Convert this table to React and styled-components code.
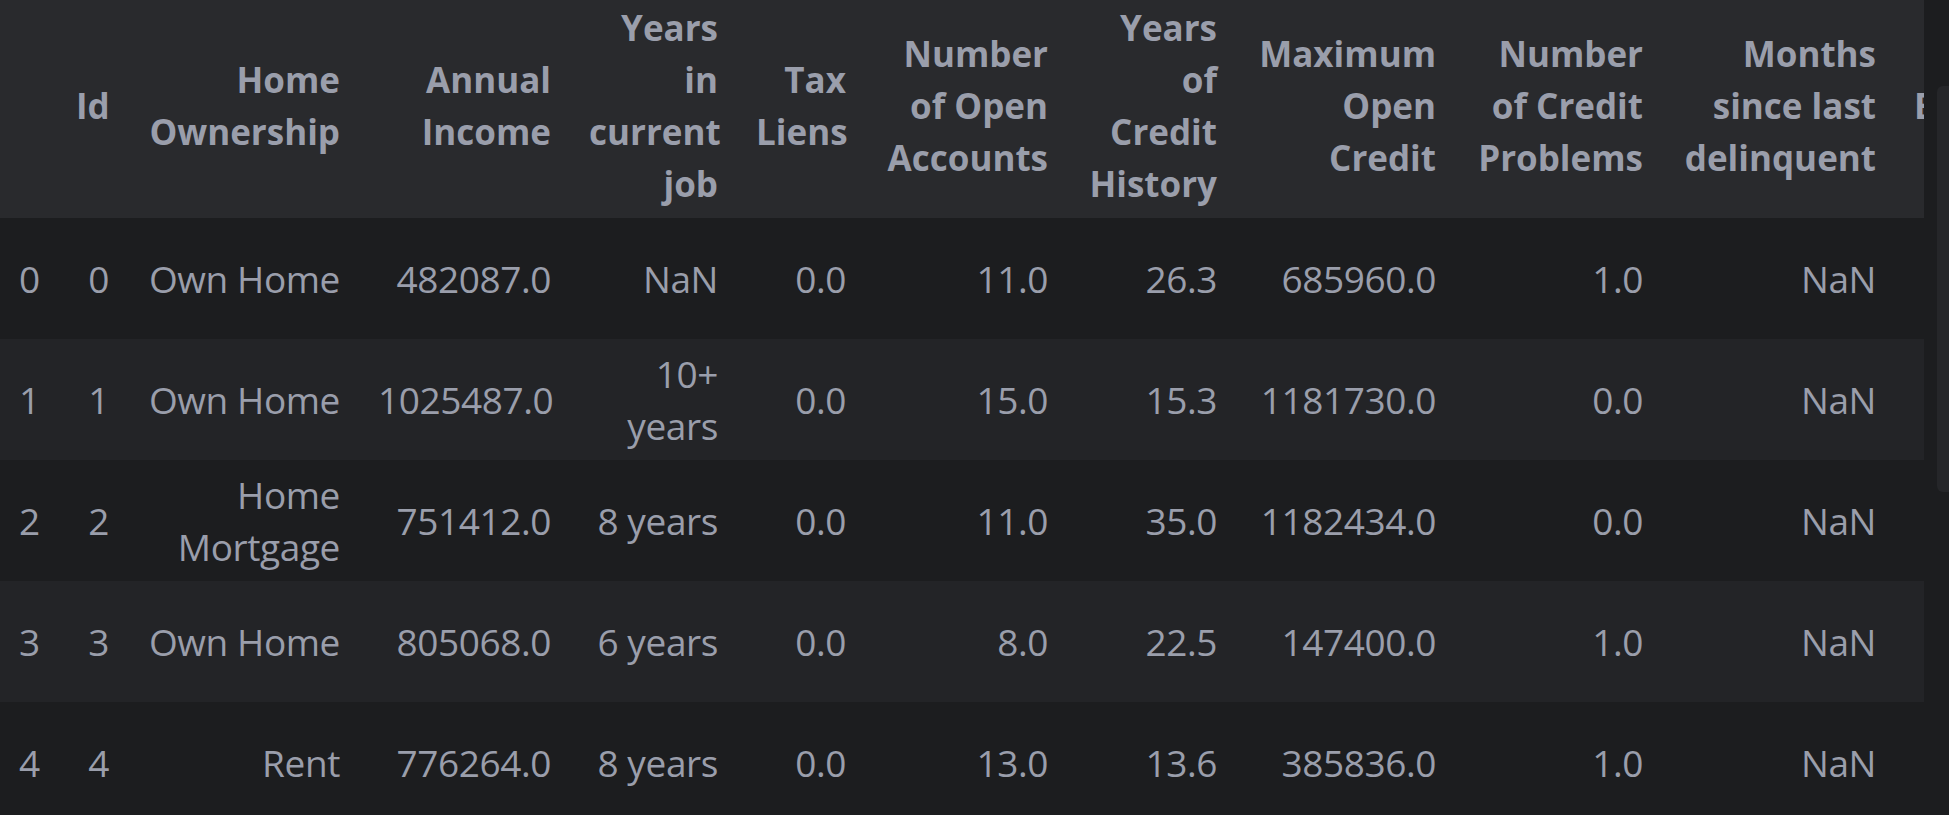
import React from 'react';
import styled, { createGlobalStyle } from 'styled-components';

const GlobalStyle = createGlobalStyle`
  html, body {
    margin: 0;
    padding: 0;
    background: #1c1d1f;
    overflow: hidden;
  }
  body {
    font-family: "Open Sans", "Noto Sans", sans-serif;
  }
`;

// column widths measured from the notebook output
const columns = [
  { key: 'idx', label: [], width: 57 },
  { key: 'id', label: ['Id'], width: 71 },
  { key: 'home', label: ['Home', 'Ownership'], width: 231 },
  { key: 'income', label: ['Annual', 'Income'], width: 211 },
  { key: 'years', label: ['Years', 'in', 'current', 'job'], width: 167 },
  { key: 'liens', label: ['Tax', 'Liens'], width: 128 },
  { key: 'accounts', label: ['Number', 'of Open', 'Accounts'], width: 202 },
  { key: 'history', label: ['Years', 'of', 'Credit', 'History'], width: 169 },
  { key: 'maxCredit', label: ['Maximum', 'Open', 'Credit'], width: 219 },
  { key: 'problems', label: ['Number', 'of Credit', 'Problems'], width: 207 },
  { key: 'months', label: ['Months', 'since last', 'delinquent'], width: 233 },
  { key: 'bankrupt', label: ['Bankruptcies'], width: 270 },
  { key: 'purpose', label: ['Purpose'], width: 300 },
];

const tableWidth = columns.reduce((sum, c) => sum + c.width, 0);

const rows = [
  { idx: '0', id: '0', home: ['Own Home'], income: '482087.0', years: ['NaN'], liens: '0.0', accounts: '11.0', history: '26.3', maxCredit: '685960.0', problems: '1.0', months: 'NaN', bankrupt: '1.0', purpose: ['debt', 'consolidation'] },
  { idx: '1', id: '1', home: ['Own Home'], income: '1025487.0', years: ['10+', 'years'], liens: '0.0', accounts: '15.0', history: '15.3', maxCredit: '1181730.0', problems: '0.0', months: 'NaN', bankrupt: '0.0', purpose: ['debt', 'consolidation'] },
  { idx: '2', id: '2', home: ['Home', 'Mortgage'], income: '751412.0', years: ['8 years'], liens: '0.0', accounts: '11.0', history: '35.0', maxCredit: '1182434.0', problems: '0.0', months: 'NaN', bankrupt: '0.0', purpose: ['debt', 'consolidation'] },
  { idx: '3', id: '3', home: ['Own Home'], income: '805068.0', years: ['6 years'], liens: '0.0', accounts: '8.0', history: '22.5', maxCredit: '147400.0', problems: '1.0', months: 'NaN', bankrupt: '1.0', purpose: ['debt', 'consolidation'] },
  { idx: '4', id: '4', home: ['Rent'], income: '776264.0', years: ['8 years'], liens: '0.0', accounts: '13.0', history: '13.6', maxCredit: '385836.0', problems: '1.0', months: 'NaN', bankrupt: '0.0', purpose: ['debt', 'consolidation'] },
];

const Page = styled.div`
  display: flex;
  width: 1949px;
  height: 815px;
  background: #1c1d1f;
`;

const Viewport = styled.div`
  width: 1924px;
  height: 100%;
  overflow: hidden;
  flex-shrink: 0;
`;

const ScrollGutter = styled.div`
  flex: 1;
  display: flex;
  flex-direction: column;
  align-items: flex-end;
  padding-top: 86px;
`;

const Thumb = styled.div`
  width: 12px;
  height: 406px;
  background: #252629;
  border-radius: 6px 0 0 6px;
`;

const Table = styled.table`
  width: ${({ $width }) => $width}px;
  border-collapse: collapse;
  table-layout: fixed;
  border: none;
  color: #9a9eab;
`;

const HeadRow = styled.tr`
  background: #292a2d;
  height: 218px;
`;

const HeadCell = styled.th`
  padding: 2px 19px 8px;
  text-align: right;
  vertical-align: middle;
  font-size: 35px;
  line-height: 52px;
  font-weight: 700;
  white-space: nowrap;
`;

const BodyRow = styled.tr`
  height: 121px;
  background: ${({ $odd }) => ($odd ? '#232427' : '#1c1d1f')};
`;

const Cell = styled.td`
  padding: 0 19px;
  text-align: right;
  vertical-align: middle;
  font-size: 37px;
  line-height: 52px;
  font-weight: 400;
  letter-spacing: -0.4px;
  white-space: nowrap;
`;

const Line = styled.div``;

const renderLines = (value) =>
  Array.isArray(value) ? value.map((l, i) => <Line key={i}>{l}</Line>) : value;

export default function App() {
  return (
    <>
      <GlobalStyle />
      <Page>
        <Viewport>
          <Table $width={tableWidth}>
            <colgroup>
              {columns.map((c) => (
                <col key={c.key} style={{ width: c.width }} />
              ))}
            </colgroup>
            <thead>
              <HeadRow>
                {columns.map((c) => (
                  <HeadCell key={c.key}>{renderLines(c.label)}</HeadCell>
                ))}
              </HeadRow>
            </thead>
            <tbody>
              {rows.map((r, i) => (
                <BodyRow key={i} $odd={i % 2 === 1}>
                  {columns.map((c) => (
                    <Cell key={c.key}>{renderLines(r[c.key])}</Cell>
                  ))}
                </BodyRow>
              ))}
            </tbody>
          </Table>
        </Viewport>
        <ScrollGutter>
          <Thumb />
        </ScrollGutter>
      </Page>
    </>
  );
}
